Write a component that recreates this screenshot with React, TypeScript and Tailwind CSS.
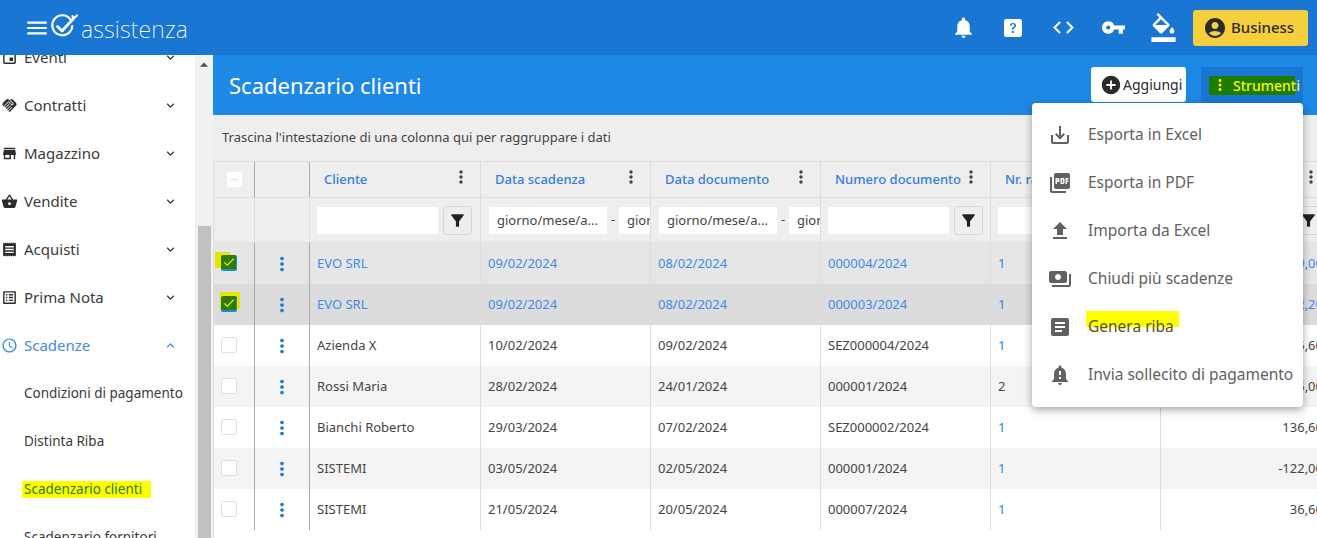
import React from "react";
import {
  MdMenu, MdNotifications, MdCode, MdVpnKey, MdFormatColorFill, MdAccountCircle, MdAddCircle, MdMoreVert,
  MdFilterAlt, MdEvent, MdHandshake, MdStore, MdShoppingBasket, MdReceipt, MdListAlt, MdAccessTime,
  MdExpandMore, MdExpandLess, MdSaveAlt, MdPictureAsPdf, MdFileUpload, MdPayments, MdArticle,
  MdNotificationImportant, MdCheck, MdRemove, MdArrowDropUp,
} from "react-icons/md";
import { BsQuestionSquareFill } from "react-icons/bs";

const navItems = [
  { label: "Eventi", Icon: MdEvent },
  { label: "Contratti", Icon: MdHandshake },
  { label: "Magazzino", Icon: MdStore },
  { label: "Vendite", Icon: MdShoppingBasket },
  { label: "Acquisti", Icon: MdReceipt },
  { label: "Prima Nota", Icon: MdListAlt },
];

const rows = [
  { c: "EVO SRL", s: "09/02/2024", d: "08/02/2024", n: "000004/2024", r: "1", a: "89,00", sel: "bg-[#e6e6e6]", hl: "left-[1px] top-[9px] w-[15px] h-[16px]", blue: true },
  { c: "EVO SRL", s: "09/02/2024", d: "08/02/2024", n: "000003/2024", r: "1", a: "72,20", sel: "bg-[#dcdcdc]", hl: "left-[6px] top-[8px] w-[20px] h-[17px]", blue: true },
  { c: "Azienda X", s: "10/02/2024", d: "09/02/2024", n: "SEZ000004/2024", r: "1", a: "35,60", sel: "bg-white" },
  { c: "Rossi Maria", s: "28/02/2024", d: "24/01/2024", n: "000001/2024", r: "2", a: "45,00", sel: "bg-[#f4f4f4]", dark: true },
  { c: "Bianchi Roberto", s: "29/03/2024", d: "07/02/2024", n: "SEZ000002/2024", r: "1", a: "136,60", sel: "bg-white" },
  { c: "SISTEMI", s: "03/05/2024", d: "02/05/2024", n: "000001/2024", r: "1", a: "-122,00", sel: "bg-[#f4f4f4]" },
  { c: "SISTEMI", s: "21/05/2024", d: "20/05/2024", n: "000007/2024", r: "1", a: "36,60", sel: "bg-white" },
];

const columns = ["Cliente", "Data scadenza", "Data documento", "Numero documento", "Nr. rata", "Importo"];
const gridCols = "grid grid-cols-[41px_55px_171px_170px_170px_170px_170px_170px]";

const menuItems = [
  { label: "Esporta in Excel", Icon: MdSaveAlt },
  { label: "Esporta in PDF", Icon: MdPictureAsPdf },
  { label: "Importa da Excel", Icon: MdFileUpload },
  { label: "Chiudi più scadenze", Icon: MdPayments },
  { label: "Genera riba", Icon: MdArticle, hl: true },
  { label: "Invia sollecito di pagamento", Icon: MdNotificationImportant },
];

function TextFilter() {
  return (
    <div className="flex items-center gap-[5px] pl-[7px] overflow-hidden h-full border-r border-[#dddddd]">
      <div className="w-[121px] h-[27px] bg-white shrink-0" />
      <div className="w-[29px] h-[29px] shrink-0 border border-[#d8d8d8] rounded-[3px] flex items-center justify-center text-[#212121]">
        <MdFilterAlt size={19} />
      </div>
    </div>
  );
}

function DateFilter() {
  return (
    <div className="flex items-center pl-[8px] overflow-hidden h-full border-r border-[#dddddd] text-[13px] text-[#444444]">
      <div className="w-[118px] h-[27px] bg-white shrink-0 pl-[8px] leading-[27px] whitespace-nowrap">giorno/mese/a...</div>
      <div className="w-[12px] shrink-0 text-center">-</div>
      <div className="w-[60px] h-[27px] bg-white shrink-0 pl-[8px] leading-[27px] whitespace-nowrap overflow-hidden">giorno</div>
    </div>
  );
}

export default function App() {
  return (
    <div className="w-[1317px] h-[538px] overflow-hidden flex flex-col bg-white font-['Roboto',sans-serif]">
      <header className="h-[55px] shrink-0 bg-[#1976d2] flex items-center text-white">
        <div className="w-[40px] flex justify-end">
          <MdMenu size={26} className="-mr-[10px]" />
        </div>
        <div className="ml-[10px] flex items-center">
          <svg width="30" height="28" viewBox="0 0 30 28" className="-mt-[1px]" fill="none" stroke="white" strokeLinecap="round" strokeLinejoin="round">
            <path d="M20.5 6.5A10 10 0 1 0 22.3 13" strokeWidth="2.2" />
            <path d="M7.5 13.5L12 18L23.5 5.5" strokeWidth="2.8" />
            <path d="M22.5 3.2L24 5L27 2.5" strokeWidth="2.2" />
          </svg>
          <span className="ml-[1px] font-['Inter',sans-serif] font-extralight text-[23px] leading-none tracking-[0.2px] mt-[3px]">assistenza</span>
        </div>
        <div className="ml-auto flex items-center">
          <div className="w-[50px] flex justify-center"><MdNotifications size={25} /></div>
          <div className="w-[50px] flex justify-center"><BsQuestionSquareFill size={18} /></div>
          <div className="w-[50px] flex justify-center"><MdCode size={25} /></div>
          <div className="w-[50px] flex justify-center"><MdVpnKey size={25} /></div>
          <div className="w-[50px] flex justify-center"><MdFormatColorFill size={29} /></div>
          <div className="ml-[5px] mr-[9px] w-[115px] h-[36px] rounded-[3px] bg-[#f5d03c] text-[#2a2a2a] flex items-center pl-[10px] gap-[4px] text-[15px] font-medium">
            <MdAccountCircle size={24} />
            <span>Business</span>
          </div>
        </div>
      </header>

      <div className="flex-1 flex min-h-0">
        <aside className="w-[195px] shrink-0 overflow-hidden text-[#3a3a3a]">
          <div className="-mt-[22px]">
            {navItems.map(({ label, Icon }) => (
              <div key={label} className="h-[48px] flex items-center">
                <Icon size={17} className="ml-[1px] text-[#2c2c2c] shrink-0" />
                <span className="ml-[6px] text-[15px]">{label}</span>
                <MdExpandMore size={15} className="ml-auto mr-[17px] text-[#333333]" />
              </div>
            ))}
            <div className="h-[48px] flex items-center text-[#3f8ae8]">
              <MdAccessTime size={17} className="ml-[1px] shrink-0" />
              <span className="ml-[6px] text-[15px]">Scadenze</span>
              <MdExpandLess size={15} className="ml-auto mr-[17px]" />
            </div>
            <div className="h-[48px] flex items-center pl-[24px] text-[13.5px]">Condizioni di pagamento</div>
            <div className="h-[48px] flex items-center pl-[24px] text-[13.5px]">Distinta Riba</div>
            <div className="h-[48px] flex items-center pl-[24px] text-[13.5px] relative">
              <span className="absolute left-[22px] top-[16px] w-[129px] h-[17px] bg-[#ffff00]" />
              <span className="relative text-[#2f7a10]">Scadenzario clienti</span>
            </div>
            <div className="h-[48px] flex items-center pl-[24px] text-[13.5px]">Scadenzario fornitori</div>
          </div>
        </aside>

        <div className="w-[18px] shrink-0 bg-[#f1f1f1] flex flex-col items-center">
          <MdArrowDropUp size={20} className="text-[#505050] shrink-0" />
          <div className="mt-[151px] w-[13px] flex-1 bg-[#c1c1c1]" />
        </div>

        <main className="relative flex-1 min-w-0 overflow-hidden flex flex-col">
          <div className="h-[60px] shrink-0 bg-[#1e88e5] flex items-center pl-[16px] text-white">
            <h1 className="text-[22px] font-normal">Scadenzario clienti</h1>
            <div className="ml-auto flex items-start pt-[12px] self-stretch">
              <div className="w-[95px] h-[35px] bg-white rounded-[3px] flex items-center pl-[9px] gap-[1px] text-[14px] text-[#2a2a2a]">
                <MdAddCircle size={22} />
                <span>Aggiungi</span>
              </div>
              <div className="ml-[15px] mr-[14px] w-[102px] h-[36px] bg-[#1976d2] rounded-[3px] flex items-center justify-center">
                <div className="w-[86px] h-[19px] bg-[#1f7a00] flex items-center text-[#f7f700] text-[14px] font-medium pl-[2px]">
                  <MdMoreVert size={18} className="shrink-0" />
                  <span className="ml-[4px] whitespace-nowrap">Strumenti</span>
                </div>
              </div>
            </div>
          </div>

          <div className="h-[47px] shrink-0 bg-[#eeeeee] flex items-center pl-[9px] text-[13px] text-[#444444] border-b border-[#dddddd]">
            Trascina l'intestazione di una colonna qui per raggruppare i dati
          </div>

          <div className="flex-1 overflow-hidden border-l border-[#e0e0e0]">
            <div className="w-[1200px]">
              <div className={`${gridCols} h-[36px] bg-[#eeeeee] border-b border-[#dddddd]`}>
                <div className="border-r border-[#aaaaaa] flex items-center justify-center">
                  <div className="w-[15px] h-[15px] bg-white rounded-[2px] flex items-center justify-center text-[#e0e0e0]"><MdRemove size={13} /></div>
                </div>
                <div className="border-r border-[#aaaaaa]" />
                {columns.map((c) => (
                  <div key={c} className="border-r border-[#dddddd] flex items-center pl-[14px] pr-[9px] text-[13px] font-medium text-[#3180e4]">
                    <span className="whitespace-nowrap">{c}</span>
                    <MdMoreVert size={20} className="ml-auto text-[#444444] -mt-[6px]" />
                  </div>
                ))}
              </div>
              <div className={`${gridCols} h-[45px] bg-[#eeeeee] border-b border-[#dddddd]`}>
                <div className="border-r border-[#dddddd]" />
                <div className="border-r border-[#dddddd]" />
                <TextFilter />
                <DateFilter />
                <DateFilter />
                <TextFilter />
                <TextFilter />
                <TextFilter />
              </div>
              {rows.map((r, i) => {
                const textCls = r.blue ? "text-[#3f8ae8]" : "text-[#444444]";
                return (
                  <div key={i} className={`${gridCols} h-[41px] text-[13px] ${r.sel} ${textCls}`}>
                    <div className="relative border-r border-[#aaaaaa]">
                      {r.blue ? (
                        <>
                          <span className={`absolute bg-[#e6e600] ${r.hl}`} />
                          <span className="absolute left-[7px] top-[12px] w-[16px] h-[16px] rounded-[2px] bg-[#2e7d00] border-b-2 border-r border-[#1e88e5] flex items-center justify-center text-[#f5f500]">
                            <MdCheck size={14} />
                          </span>
                        </>
                      ) : (
                        <span className="absolute left-[7px] top-[12px] w-[16px] h-[16px] rounded-[2px] bg-white border border-[#e0e0e0]" />
                      )}
                    </div>
                    <div className="border-r border-[#aaaaaa] flex items-center justify-center text-[#1976d2] pr-[1px]">
                      <MdMoreVert size={22} />
                    </div>
                    <div className="border-r border-[#dddddd] flex items-center pl-[7px]">{r.c}</div>
                    <div className="border-r border-[#dddddd] flex items-center pl-[7px]">{r.s}</div>
                    <div className="border-r border-[#dddddd] flex items-center pl-[7px]">{r.d}</div>
                    <div className="border-r border-[#dddddd] flex items-center pl-[7px]">{r.n}</div>
                    <div className={`border-r border-[#dddddd] flex items-center pl-[7px] ${r.dark ? "text-[#444444]" : "text-[#1e88e5]"}`}>{r.r}</div>
                    <div className="border-r border-[#dddddd] flex items-center justify-end pr-[7px]">{r.a}</div>
                  </div>
                );
              })}
            </div>
          </div>

          <div className="absolute left-[819px] top-[48px] w-[271px] h-[304px] bg-white rounded-[4px] shadow-[0_3px_8px_rgba(0,0,0,0.35)] py-[8px] text-[16px] text-[#616161]">
            {menuItems.map(({ label, Icon, hl }) => (
              <div key={label} className="h-[48px] flex items-center pl-[16px]">
                <Icon size={24} className="shrink-0" />
                <span className="relative ml-[16px] whitespace-nowrap text-[15.5px]">
                  {hl && <span className="absolute -left-[2px] -top-[4px] w-[93px] h-[16px] bg-[#ffff00]" />}
                  <span className={hl ? "relative text-[#555500]" : "relative"}>{label}</span>
                </span>
              </div>
            ))}
          </div>
        </main>
      </div>
    </div>
  );
}
